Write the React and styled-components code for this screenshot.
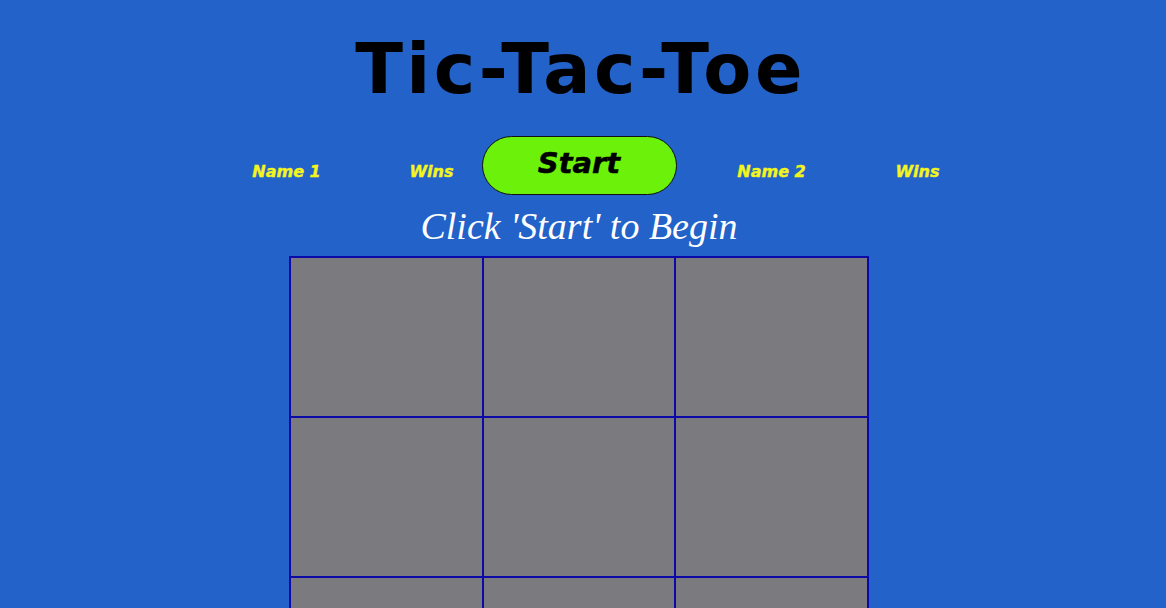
import React from 'react'
import styled, { createGlobalStyle } from 'styled-components'

const GlobalStyle = createGlobalStyle`
  html, body {
    margin: 0;
    padding: 0;
    background: #2262c9;
  }
  body {
    font-family: "DejaVu Sans", sans-serif;
    overflow: hidden;
  }
`

const Page = styled.div`
  display: flex;
  flex-direction: column;
  align-items: center;
  padding: 29px 8px 0 0;
`

const Title = styled.h1`
  margin: 0;
  font-family: "Comic Sans MS", "DejaVu Sans", sans-serif;
  font-weight: bold;
  font-size: 70px;
  line-height: 80px;
  color: #000;
  letter-spacing: 3.5px;
  padding-left: 3px;
`

const Scoreboard = styled.div`
  display: grid;
  grid-template-columns: 1fr auto 1fr;
  align-items: center;
  width: 100%;
  margin-top: 27px;
`

const Side = styled.div`
  display: flex;
  align-items: center;
  justify-self: ${p => (p.left ? 'end' : 'start')};
  gap: ${p => (p.left ? '65px' : '66px')};
  padding: ${p => (p.left ? '0 20px 0 0' : '0 0 0 45px')};
`

const Label = styled.span`
  display: block;
  width: ${p => p.w}px;
  text-align: center;
  margin-top: 12px;
  font-family: "DejaVu Sans", sans-serif;
  font-weight: 900;
  font-style: italic;
  font-size: 16px;
  line-height: 20px;
  color: #f4f51b;
  -webkit-text-stroke: 0.4px #f4f51b;
`

const StartButton = styled.button`
  width: 195px;
  height: 59px;
  border: 1px solid #111;
  border-radius: 30px;
  background: #6cf20a;
  color: #000;
  font-family: "DejaVu Sans", sans-serif;
  font-weight: bold;
  font-style: italic;
  font-size: 29px;
  padding: 0 0 5px;
  cursor: pointer;
  -webkit-text-stroke: 0.5px #000;
`

const Status = styled.div`
  margin-top: 7px;
  font-family: "Liberation Serif", serif;
  font-style: italic;
  font-size: 38px;
  line-height: 48px;
  color: #fff;
`

const Board = styled.div`
  display: grid;
  grid-template-columns: repeat(3, 1fr);
  grid-auto-rows: 158px;
  gap: 2px;
  padding: 2px;
  width: 580px;
  box-sizing: border-box;
  margin-top: 6px;
  background: #0b0aa8;
`

const Cell = styled.div`
  background: #7b7a7f;
`

export default function App() {
  return (
    <Page>
      <GlobalStyle />
      <Title>Tic-Tac-Toe</Title>
      <Scoreboard>
        <Side left>
          <Label w={100}>Name 1</Label>
          <Label w={60}>Wins</Label>
        </Side>
        <StartButton>Start</StartButton>
        <Side>
          <Label w={100}>Name 2</Label>
          <Label w={60}>Wins</Label>
        </Side>
      </Scoreboard>
      <Status>Click 'Start' to Begin</Status>
      <Board>
        {Array.from({ length: 9 }).map((_, i) => (
          <Cell key={i} />
        ))}
      </Board>
    </Page>
  )
}
